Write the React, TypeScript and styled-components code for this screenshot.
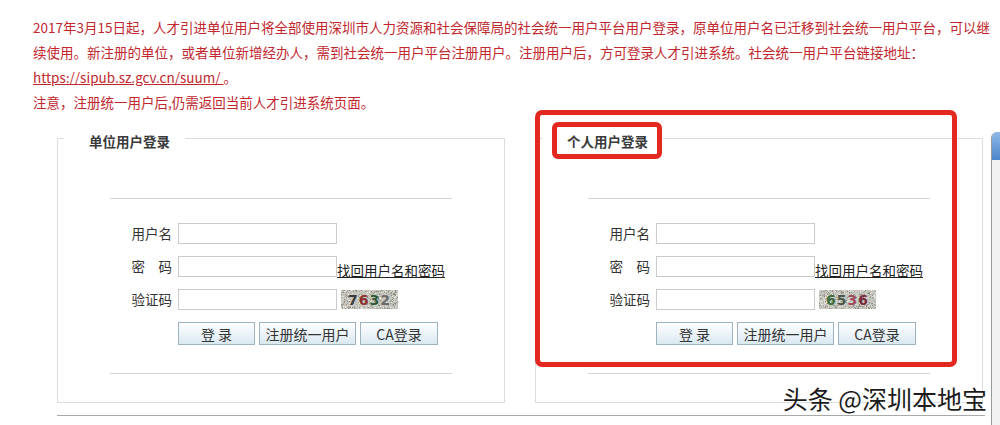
import styled, { createGlobalStyle } from 'styled-components'

const GlobalStyle = createGlobalStyle`
  html, body {
    margin: 0;
    padding: 0;
    background: #ffffff;
  }
  body {
    font-family: "Noto Sans CJK SC", "Noto Sans", sans-serif;
    color: #333333;
  }
`

const Page = styled.div`
  position: relative;
  width: 1000px;
  height: 425px;
  overflow: hidden;
  background: #ffffff;
`

const Notice = styled.div`
  padding: 15px 0 0 33px;
  font-size: 13.5px;
  line-height: 25px;
  color: #c1272d;
  white-space: nowrap;
`

const NoticeLink = styled.a`
  color: #c1272d;
  text-decoration: underline;
`

const Panels = styled.div`
  display: flex;
  gap: 30px;
  margin: 10px 0 0 57px;
`

const PanelSlot = styled.div`
  position: relative;
`

const Panel = styled.fieldset`
  box-sizing: border-box;
  width: 448px;
  min-width: 0;
  margin: 0;
  padding: 0 0 28px;
  border: 1px solid #dcdcdc;
`

const Legend = styled.legend`
  margin-left: 6px;
  padding: 6px 15px 0 25px;
  font-size: 13.5px;
  line-height: 20px;
  font-weight: bold;
  color: #3a3a3a;
`

const Rule = styled.div<{ $top: number }>`
  margin: ${p => p.$top}px 52px 0;
  border-top: 1px solid #d4d4d4;
`

const Form = styled.div`
  display: grid;
  grid-template-columns: 120px 159px auto;
  row-gap: 12px;
  align-items: center;
  margin: 24px 0 28px;
`

const Label = styled.label`
  padding-right: 6px;
  text-align: right;
  font-size: 13.5px;
  line-height: 21px;
  color: #333333;
  white-space: pre;
`

const Input = styled.input`
  box-sizing: border-box;
  width: 159px;
  height: 21px;
  margin: 0;
  padding: 0 3px;
  border: 1px solid #cbcbcb;
  background: #ffffff;
  outline: none;
`

const Forgot = styled.a`
  align-self: end;
  margin-bottom: -3px;
  font-size: 13.5px;
  line-height: 20px;
  color: #222222;
  text-decoration: underline;
  white-space: nowrap;
`

const Captcha = styled.div`
  position: relative;
  width: 57px;
  height: 19px;
  margin-left: 4px;
  background: #c6c6bf;
  overflow: hidden;
`

const CaptchaDigits = styled.div`
  position: absolute;
  inset: 0;
  display: flex;
  align-items: center;
  justify-content: center;
  font-family: "DejaVu Sans", sans-serif;
  font-weight: bold;
  font-size: 14px;
  letter-spacing: 1px;
`

const Buttons = styled.div`
  grid-column: 2 / 4;
  display: flex;
  gap: 4px;
`

const Button = styled.button<{ $w: number }>`
  box-sizing: border-box;
  width: ${p => p.$w}px;
  height: 23px;
  margin: 0;
  padding: 2px 0 0;
  border: 1px solid #9db3c1;
  background: linear-gradient(#fdfeff 0%, #eef5f9 45%, #d9e8f0 100%);
  font-family: "Noto Sans CJK SC", sans-serif;
  font-size: 14px;
  line-height: 19px;
  color: #333333;
  white-space: pre;
`

const BottomLine = styled.div`
  margin: 12px 15px 0 57px;
  border-top: 1px solid #a9a9a9;
`

const Mark = styled.div<{ $x: number; $y: number; $w: number; $h: number; $r: number }>`
  position: absolute;
  left: ${p => p.$x}px;
  top: ${p => p.$y}px;
  width: ${p => p.$w}px;
  height: ${p => p.$h}px;
  box-sizing: border-box;
  border: 5px solid #e3291f;
  border-radius: ${p => p.$r}px;
  pointer-events: none;
`

const SideWindow = styled.div`
  position: absolute;
  top: 132px;
  right: 0;
  bottom: 0;
  width: 8px;
  border-left: 1px solid #9a9a9a;
  border-top-left-radius: 6px;
  background: #f2f2f2;
  overflow: hidden;
`

const SideTitle = styled.div`
  height: 28px;
  background: linear-gradient(#8fb9e6, #4c86cc);
`

const Watermark = styled.div`
  position: absolute;
  top: 385px;
  right: 13px;
  font-family: "Noto Sans CJK SC", sans-serif;
  font-size: 25px;
  line-height: 27px;
  color: #1c1c1c;
  text-shadow: 0 0 2px #ffffff, 0 0 2px #ffffff, 1px 1px 0 #ffffff;
  white-space: pre;
`

type Digit = { ch: string; color: string }

function Noise({ seed }: { seed: number }) {
  let s = seed
  const rnd = () => {
    s = (s * 16807) % 2147483647
    return s / 2147483647
  }
  const dots = Array.from({ length: 420 }, () => {
    const v = rnd()
    return {
      x: Math.floor(rnd() * 57),
      y: Math.floor(rnd() * 19),
      c: v > 0.6 ? '#8d8d86' : v > 0.25 ? '#e6e6e0' : '#a9a9a2'
    }
  })
  return (
    <svg width="57" height="19" style={{ position: 'absolute', inset: 0 }}>
      {dots.map((d, i) => (
        <rect key={i} x={d.x} y={d.y} width="1" height="1" fill={d.c} />
      ))}
    </svg>
  )
}

function LoginPanel({ title, digits, seed }: { title: string; digits: Digit[]; seed: number }) {
  return (
    <Panel>
      <Legend>{title}</Legend>
      <Rule $top={47} />
      <Form>
        <Label>用户名</Label>
        <Input />
        <span />
        <Label>{'密　码'}</Label>
        <Input type="password" />
        <Forgot>找回用户名和密码</Forgot>
        <Label>验证码</Label>
        <Input />
        <Captcha>
          <Noise seed={seed} />
          <CaptchaDigits>
            {digits.map((d, i) => (
              <span key={i} style={{ color: d.color }}>
                {d.ch}
              </span>
            ))}
          </CaptchaDigits>
        </Captcha>
        <Buttons>
          <Button $w={77}>{'登 录'}</Button>
          <Button $w={97}>注册统一用户</Button>
          <Button $w={78}>CA登录</Button>
        </Buttons>
      </Form>
      <Rule $top={0} />
    </Panel>
  )
}

export default function App() {
  return (
    <Page>
      <GlobalStyle />
      <Notice>
        2017年3月15日起，人才引进单位用户将全部使用深圳市人力资源和社会保障局的社会统一用户平台用户登录，原单位用户名已迁移到社会统一用户平台，可以继
        <br />
        续使用。新注册的单位，或者单位新增经办人，需到社会统一用户平台注册用户。注册用户后，方可登录人才引进系统。社会统一用户平台链接地址：
        <br />
        <NoticeLink>https://sipub.sz.gcv.cn/suum/ </NoticeLink>。
        <br />
        注意，注册统一用户后,仍需返回当前人才引进系统页面。
      </Notice>
      <Panels>
        <PanelSlot>
          <LoginPanel
            title="单位用户登录"
            seed={7632}
            digits={[
              { ch: '7', color: '#3b3b3b' },
              { ch: '6', color: '#8c3030' },
              { ch: '3', color: '#2e5a3a' },
              { ch: '2', color: '#6b6b6b' }
            ]}
          />
        </PanelSlot>
        <PanelSlot>
          <LoginPanel
            title="个人用户登录"
            seed={6536}
            digits={[
              { ch: '6', color: '#3d6e3d' },
              { ch: '5', color: '#4b5a4a' },
              { ch: '3', color: '#a04a5c' },
              { ch: '6', color: '#7a2a3a' }
            ]}
          />
          <Mark $x={0} $y={-15} $w={422} $h={257} $r={7} />
          <Mark $x={17} $y={-3} $w={110} $h={37} $r={6} />
        </PanelSlot>
      </Panels>
      <BottomLine />
      <SideWindow>
        <SideTitle />
      </SideWindow>
      <Watermark>头条 @深圳本地宝</Watermark>
    </Page>
  )
}
